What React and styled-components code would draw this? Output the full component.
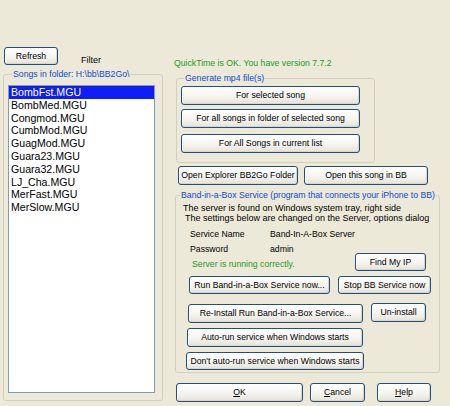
import styled, { createGlobalStyle } from 'styled-components';

const GlobalStyle = createGlobalStyle`
  html, body {
    margin: 0;
    padding: 0;
    background: #ece9d8;
  }
`;

const songs = [
  'BombFst.MGU',
  'BombMed.MGU',
  'Congmod.MGU',
  'CumbMod.MGU',
  'GuagMod.MGU',
  'Guara23.MGU',
  'Guara32.MGU',
  'LJ_Cha.MGU',
  'MerFast.MGU',
  'MerSlow.MGU',
];

// Styles Start
const Dialog = styled.div`
  width: 450px;
  height: 406px;
  overflow: hidden;
  box-sizing: border-box;
  padding-left: 3px;
  display: flex;
  background: #ece9d8;
  font-family: 'Liberation Sans', Arial, sans-serif;
  font-size: 8.7px;
  color: #000;
`;

const LeftColumn = styled.div`
  width: 160px;
  display: flex;
  flex-direction: column;
  padding-top: 47px;
`;

const RightColumn = styled.div`
  flex: 1;
  margin-left: 11px;
  display: flex;
  flex-direction: column;
  padding-top: 57px;
`;

const Toolbar = styled.div`
  display: flex;
  align-items: flex-end;
  gap: 23px;
  padding-left: 1px;
  height: 18px;
`;

const Label = styled.span`
  line-height: 12px;
  margin-bottom: -1px;
  font-size: 9px;
`;

const Button = styled.button`
  box-sizing: border-box;
  width: ${(p) => p.$w}px;
  height: ${(p) => p.$h || 19}px;
  margin: 0;
  padding: 0;
  border: 1px solid #234f7e;
  border-radius: 3px;
  background: linear-gradient(#ffffff, #f5f4ef 55%, #e4e2d8);
  box-shadow: inset -1px -1px 0 #d9d5c9, inset 1px 1px 0 #ffffff;
  font: inherit;
  color: #000;
  white-space: nowrap;
  line-height: 1;
`;

const GroupBox = styled.fieldset`
  box-sizing: border-box;
  margin: 0;
  min-width: 0;
  border: 1px solid #d0d0bf;
  border-radius: 3px;
  display: flex;
  flex-direction: column;
`;

const GroupTitle = styled.legend`
  color: #0a4ad8;
  padding: 0 1px;
  margin-left: ${(p) => p.$indent || 4}px;
  line-height: 11px;
  white-space: nowrap;
`;

const SongsGroup = styled(GroupBox)`
  margin-top: 4px;
  margin-bottom: 5px;
  flex: 1;
  padding: 5px 7px 7px 4px;
`;

const ListBox = styled.ul`
  flex: 1;
  margin: 0;
  padding: 0;
  list-style: none;
  background: #fff;
  border: 1px solid #7f9db9;
  font-size: 10.6px;
  line-height: 12.8px;
`;

const ListItem = styled.li`
  padding-left: 2px;
  background: ${(p) => (p.$selected ? '#0f1ef5' : 'transparent')};
  color: ${(p) => (p.$selected ? '#fff' : '#000')};
`;

const StatusText = styled.div`
  color: #1f9a22;
  line-height: 12px;
`;

const GenerateGroup = styled(GroupBox)`
  margin: 4px 0 0 2px;
  width: 199px;
  padding: 2px 0 9px 4px;
  gap: 4px;
`;

const ButtonRow = styled.div`
  display: flex;
  align-items: flex-start;
  gap: ${(p) => p.$gap || 6}px;
  margin-top: ${(p) => p.$top || 0}px;
  padding-left: ${(p) => p.$left || 0}px;
`;

const ServiceGroup = styled(GroupBox)`
  margin: 5px 0 0 1px;
  width: 265px;
  height: 183px;
  padding: 2px 0 0 0;
`;

const Note = styled.div`
  padding-left: ${(p) => p.$indent}px;
  line-height: 10px;
  font-size: 9px;
  white-space: nowrap;
`;

const InfoGrid = styled.div`
  display: grid;
  grid-template-columns: 80px auto;
  grid-auto-rows: 15px;
  align-items: center;
  margin-top: 3px;
  padding-left: 14px;
`;

const StatusRow = styled.div`
  display: flex;
  justify-content: space-between;
  align-items: flex-end;
  padding-left: 16px;
  padding-right: 13px;
  margin-top: -3px;
`;

const ServerStatus = styled(StatusText)`
  margin-bottom: 1px;
`;

const Accel = styled.span`
  text-decoration: underline;
`;
// Styles End

const App = () => (
  <>
    <GlobalStyle />
    <Dialog>
      <LeftColumn>
        <Toolbar>
          <Button $w={54} $h={18}>Refresh</Button>
          <Label>Filter</Label>
        </Toolbar>
        <SongsGroup>
          <GroupTitle $indent={4}>Songs in folder: H:\bb\BB2Go\</GroupTitle>
          <ListBox>
            {songs.map((song, i) => (
              <ListItem key={song} $selected={i === 0}>
                {song}
              </ListItem>
            ))}
          </ListBox>
        </SongsGroup>
      </LeftColumn>

      <RightColumn>
        <StatusText>QuickTime is OK. You have version 7.7.2</StatusText>
        <GenerateGroup>
          <GroupTitle $indent={3}>Generate mp4 file(s)</GroupTitle>
          <Button $w={179}>For selected song</Button>
          <Button $w={179}>For all songs in folder of selected song</Button>
          <Button $w={179} style={{ marginTop: 2 }}>
            For All Songs in current list
          </Button>
        </GenerateGroup>

        <ButtonRow $top={3} $left={4} $gap={6}>
          <Button $w={120}>Open Explorer BB2Go Folder</Button>
          <Button $w={124}>Open this song in BB</Button>
        </ButtonRow>

        <ServiceGroup>
          <GroupTitle $indent={4}>
            Band-in-a-Box Service (program that connects your iPhone to BB)
          </GroupTitle>
          <Note $indent={7}>The server is found on Windows system tray, right side</Note>
          <Note $indent={9}>The settings below are changed on the Server, options dialog</Note>
          <InfoGrid>
            <span>Service Name</span>
            <span>Band-In-A-Box Server</span>
            <span>Password</span>
            <span>admin</span>
          </InfoGrid>
          <StatusRow>
            <ServerStatus>Server is running correctly.</ServerStatus>
            <Button $w={71} $h={18}>Find My IP</Button>
          </StatusRow>
          <ButtonRow $top={5} $left={13} $gap={8}>
            <Button $w={141} $h={18}>Run Band-in-a-Box Service now...</Button>
            <Button $w={93} $h={18}>Stop BB Service now</Button>
          </ButtonRow>
          <ButtonRow $top={9} $left={12} $gap={8}>
            <Button $w={175} style={{ marginTop: 1 }}>
              Re-Install Run Band-in-a-Box Service...
            </Button>
            <Button $w={55}>Un-install</Button>
          </ButtonRow>
          <ButtonRow $top={5} $left={11}>
            <Button $w={176}>Auto-run service when Windows starts</Button>
          </ButtonRow>
          <ButtonRow $top={5} $left={10}>
            <Button $w={178} $h={18}>Don't auto-run service when Windows starts</Button>
          </ButtonRow>
        </ServiceGroup>

        <ButtonRow $top={10} $left={2} $gap={7}>
          <Button $w={127}>
            <Accel>O</Accel>K
          </Button>
          <Button $w={55}>
            <Accel>C</Accel>ancel
          </Button>
          <Button $w={54} style={{ marginLeft: 5 }}>
            <Accel>H</Accel>elp
          </Button>
        </ButtonRow>
      </RightColumn>
    </Dialog>
  </>
);

export default App;
